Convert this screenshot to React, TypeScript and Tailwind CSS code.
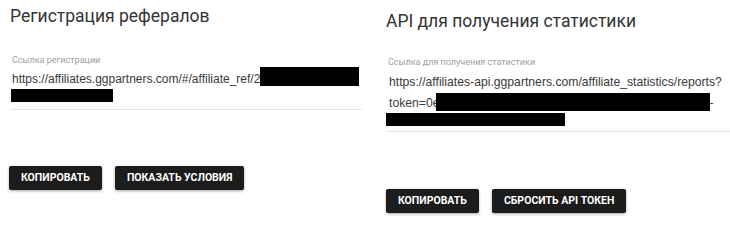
const Redacted = ({ className }: { className: string }) => (
  <span className={`block shrink-0 bg-black ${className}`} />
);

const ActionButton = ({ children }: { children: React.ReactNode }) => (
  <button
    type="button"
    className="flex h-[24px] items-center rounded-[2px] bg-[#1c1c1c] px-[12px] font-['Roboto',sans-serif] text-[10.5px] font-bold uppercase leading-none text-white shadow-[0_1px_3px_rgba(0,0,0,0.35)]"
  >
    {children}
  </button>
);

const App = () => {
  return (
    <div className="flex h-[226px] w-[730px] overflow-hidden bg-white">
      {/* referral link */}
      <section className="ml-[10px] flex w-[352px] shrink-0 flex-col pt-[4px]">
        <h2 className="h-[24px] font-['Roboto',sans-serif] text-[17.5px] leading-[24px] text-[#333]">
          Регистрация рефералов
        </h2>
        <div className="mt-[26px] pl-[2px] font-['Roboto',sans-serif] text-[9px] leading-[12px] text-[#a0a0a0]">
          Ссылка регистрации
        </div>
        <div className="mt-[3px] flex h-[20px] items-start pl-[2px] font-['Liberation_Sans',Arial,sans-serif] text-[12px] leading-[20px] text-[#3a3a3a]">
          <span>https://affiliates.ggpartners.com/#/affiliate_ref/2</span>
          <Redacted className="-mt-[2px] h-[19px] w-[99px]" />
        </div>
        <Redacted className="ml-[1px] h-[13px] w-[102px]" />
        <div className="mt-[7px] border-t border-[#e4e4e4]" />
        <div className="-ml-[1px] mt-[56px] flex gap-[13px]">
          <ActionButton>Копировать</ActionButton>
          <ActionButton>Показать условия</ActionButton>
        </div>
      </section>

      {/* statistics API */}
      <section className="ml-[24px] flex w-[360px] shrink-0 flex-col pt-[9px]">
        <h2 className="h-[24px] font-['Roboto',sans-serif] text-[17.5px] leading-[24px] text-[#333]">
          API для получения статистики
        </h2>
        <div className="mt-[23px] pl-[2px] font-['Roboto',sans-serif] text-[9px] leading-[12px] text-[#a0a0a0]">
          Ссылка для получения статистики
        </div>
        <div className="mt-[4px] h-[20px] pl-[3px] font-['Liberation_Sans',Arial,sans-serif] text-[12.2px] leading-[20px] text-[#3a3a3a]">
          https://affiliates-api.ggpartners.com/affiliate_statistics/reports?
        </div>
        <div className="mt-[1px] flex h-[20px] items-start pl-[3px] font-['Liberation_Sans',Arial,sans-serif] text-[12.2px] leading-[20px] text-[#3a3a3a]">
          <span>token=0e</span>
          <Redacted className="-ml-[4px] h-[18px] w-[274px]" />
          <span>-</span>
        </div>
        <Redacted className="h-[13px] w-[179px]" />
        <div className="mt-[5px] border-t border-[#e4e4e4]" />
        <div className="mt-[57px] flex gap-[13px]">
          <ActionButton>Копировать</ActionButton>
          <ActionButton>Сбросить API токен</ActionButton>
        </div>
      </section>
    </div>
  );
};

export default App;
